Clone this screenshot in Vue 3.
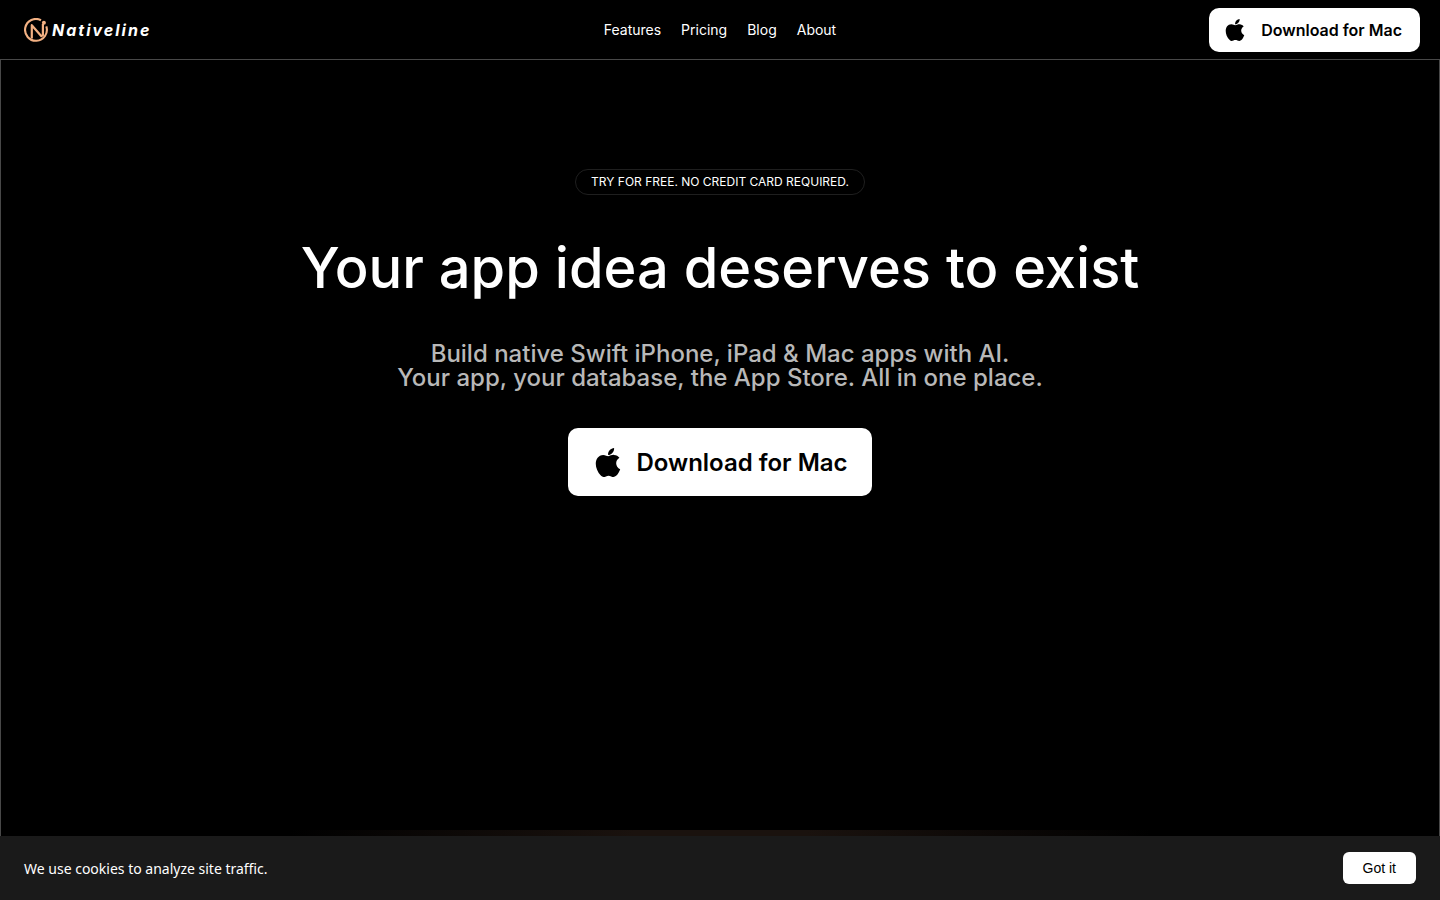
<script setup>
const links = ['Features', 'Pricing', 'Blog', 'About']
const applePath =
  'M17.05 20.28c-.98.95-2.05.8-3.08.35-1.09-.46-2.09-.48-3.24 0-1.44.62-2.2.44-3.06-.35C2.79 15.25 3.51 7.59 9.05 7.31c1.35.07 2.29.74 3.08.8 1.18-.24 2.31-.93 3.57-.84 1.51.12 2.65.72 3.4 1.8-3.12 1.87-2.38 5.98.48 7.13-.57 1.5-1.31 2.99-2.54 4.09zM12.03 7.25c-.15-2.23 1.66-4.07 3.74-4.25.29 2.58-2.34 4.5-3.74 4.25z'
</script>

<template>
  <div class="page">
    <header class="bar">
      <a class="brand" href="#">
        <svg class="mark" viewBox="0 0 24 24" fill="none" stroke="#f3b183" aria-hidden="true">
          <path d="M17 2.2A10.9 10.9 0 1 0 22.3 8.4" stroke-width="2.1" />
          <path d="M7.8 20.4V7.2L17.4 18.2L18.9 17.2V6" stroke-width="2.2" stroke-linejoin="round" />
          <circle cx="19.9" cy="4.8" r="2" fill="#f3b183" stroke="none" />
        </svg>
        <span>Nativeline</span>
      </a>
      <nav class="links">
        <a v-for="link in links" :key="link" href="#">{{ link }}</a>
      </nav>
      <div class="action">
        <a class="download small" href="#">
          <svg viewBox="4 3 16 18" aria-hidden="true"><path :d="applePath" /></svg>
          <span>Download for Mac</span>
        </a>
      </div>
    </header>

    <main class="hero">
      <p class="pill">TRY FOR FREE. NO CREDIT CARD REQUIRED.</p>
      <h1>Your app idea deserves to exist</h1>
      <p class="lead">
        Build native Swift iPhone, iPad &amp; Mac apps with AI.<br />
        Your app, your database, the App Store. All in one place.
      </p>
      <a class="download large" href="#">
        <svg viewBox="4 3 16 18" aria-hidden="true"><path :d="applePath" /></svg>
        <span>Download for Mac</span>
      </a>
      <div class="glow"></div>
    </main>

    <aside class="cookies">
      <p>We use cookies to analyze site traffic.</p>
      <button type="button">Got it</button>
    </aside>
  </div>
</template>

<style>
body {
  background: #000;
}
</style>

<style scoped>
.page {
  min-height: 100vh;
  display: flex;
  flex-direction: column;
  background: #000;
  color: #fff;
  font-family: Inter, sans-serif;
}
.page * {
  box-sizing: border-box;
}
a {
  color: inherit;
  text-decoration: none;
}
p,
h1 {
  margin: 0;
}
.bar {
  display: grid;
  grid-template-columns: 1fr auto 1fr;
  align-items: center;
  height: 60px;
  padding: 0 20px;
  border-bottom: 1px solid #484848;
}
.brand {
  display: flex;
  align-items: center;
  gap: 4px;
  padding-left: 4px;
  font-size: 16px;
  font-weight: 700;
  font-style: italic;
  letter-spacing: 2px;
}
.mark {
  width: 24px;
  height: 24px;
}
.links {
  display: flex;
  gap: 20px;
  font-size: 14px;
  line-height: 20px;
}
.action {
  display: flex;
  justify-content: flex-end;
}
.download {
  display: flex;
  align-items: center;
  background: #fff;
  color: #000;
  font-weight: 600;
  white-space: nowrap;
}
.small {
  height: 44px;
  gap: 16px;
  padding: 0 18px 0 16px;
  border-radius: 10px;
  font-size: 16px;
}
.small svg {
  width: 20px;
  height: 22px;
}
.large {
  height: 68px;
  gap: 14px;
  padding: 0 24px 0 26px;
  border-radius: 10px;
  font-size: 24px;
}
.large svg {
  width: 28px;
  height: 29px;
}
.hero {
  flex: 1;
  display: flex;
  flex-direction: column;
  align-items: center;
  padding-top: 109px;
  border: solid #484848;
  border-width: 0 1px;
  text-align: center;
}
.pill {
  padding: 4px 15px;
  border: 1px solid #1f1f1f;
  border-radius: 13px;
  font-size: 12px;
  line-height: 16px;
}
h1 {
  margin-top: 37px;
  font-size: 56px;
  font-weight: 500;
  line-height: 72px;
}
.lead {
  margin: 38px 0;
  color: #b8b8b8;
  font-size: 24px;
  font-weight: 500;
  line-height: 24px;
}
.glow {
  width: 60%;
  height: 6px;
  margin-top: auto;
  background: linear-gradient(90deg, transparent, #1a120e 40%, #1a120e 60%, transparent);
}
.cookies {
  display: flex;
  align-items: center;
  justify-content: space-between;
  height: 64px;
  padding: 0 24px;
  background: #1a1a1a;
  font-family: "Noto Sans", sans-serif;
  font-size: 14px;
}
.cookies button {
  height: 32px;
  padding: 0 20px;
  border: 0;
  border-radius: 6px;
  background: #fff;
  color: #000;
  font-family: "Liberation Sans", sans-serif;
  font-size: 14px;
}
</style>
